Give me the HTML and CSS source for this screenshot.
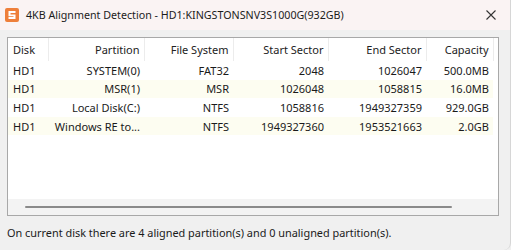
FILE: index.html
```html
<!DOCTYPE html>
<html lang="en">
<head>
    <meta charset="UTF-8">
    <title>4KB Alignment Detection</title>
    <link rel="stylesheet" href="styles.css">
</head>
<body>
    <div class="window">
        <div class="titlebar">
            <svg class="app-icon" width="14" height="14" viewBox="0 0 14 14">
                <rect x="0" y="0" width="14" height="14" rx="2" fill="#ee7f3a"/>
                <path d="M3.5 3h7v2h-5v1.5h5v4.5h-7v-2h5v-0.8h-5z" fill="#fff"/>
            </svg>
            <span class="title">4KB Alignment Detection - HD1:KINGSTONSNV3S1000G(932GB)</span>
            <svg class="close" width="10" height="10" viewBox="0 0 10 10">
                <path d="M0.5 0.5l9 9M9.5 0.5l-9 9" stroke="#333" stroke-width="1.1" fill="none"/>
            </svg>
        </div>
        <div class="content">
            <div class="listview">
                <table>
                    <thead>
                        <tr>
                            <th class="c-disk">Disk</th>
                            <th class="c-part">Partition</th>
                            <th class="c-fs">File System</th>
                            <th class="c-start">Start Sector</th>
                            <th class="c-end">End Sector</th>
                            <th class="c-cap">Capacity</th>
                        </tr>
                    </thead>
                    <tbody>
                        <tr>
                            <td class="c-disk">HD1</td>
                            <td>SYSTEM(0)</td>
                            <td>FAT32</td>
                            <td>2048</td>
                            <td>1026047</td>
                            <td>500.0MB</td>
                        </tr>
                        <tr class="alt">
                            <td class="c-disk">HD1</td>
                            <td>MSR(1)</td>
                            <td>MSR</td>
                            <td>1026048</td>
                            <td>1058815</td>
                            <td>16.0MB</td>
                        </tr>
                        <tr>
                            <td class="c-disk">HD1</td>
                            <td>Local Disk(C:)</td>
                            <td>NTFS</td>
                            <td>1058816</td>
                            <td>1949327359</td>
                            <td>929.0GB</td>
                        </tr>
                        <tr class="alt">
                            <td class="c-disk">HD1</td>
                            <td>Windows RE to...</td>
                            <td>NTFS</td>
                            <td>1949327360</td>
                            <td>1953521663</td>
                            <td>2.0GB</td>
                        </tr>
                    </tbody>
                </table>
                <div class="spacer"></div>
                <div class="hscroll"><div class="thumb"></div></div>
            </div>
            <p class="status">On current disk there are 4 aligned partition(s) and 0 unaligned partition(s).</p>
        </div>
    </div>
</body>
</html>
```
FILE: styles.css
```css
* {
    margin: 0;
    padding: 0;
    box-sizing: border-box;
}

body {
    width: 511px;
    height: 250px;
    overflow: hidden;
    background: #f0f0f0;
    font-family: "Noto Sans", "Open Sans", sans-serif;
    font-size: 11px;
    color: #1a1a1a;
}

.window {
    height: 250px;
    display: flex;
    flex-direction: column;
    background: #f0f0f0;
    border-right: 1px solid #d6d6d6;
    border-bottom-right-radius: 7px;
}

.titlebar {
    height: 30px;
    display: flex;
    align-items: center;
    background: #faf3f3;
    padding: 0 0 0 5px;
}

.app-icon {
    flex: none;
    margin-right: 7px;
}

.title {
    flex: 1;
    color: #1c1c1c;
    font-size: 10.7px;
}

.close {
    flex: none;
    margin-right: 14px;
}

.content {
    flex: 1;
    padding: 7px 11px 0 7px;
}

.listview {
    height: 179px;
    background: #fff;
    border: 1px solid #a8a8a8;
    display: flex;
    flex-direction: column;
}

table {
    border-collapse: collapse;
    table-layout: fixed;
    width: 485px;
}

th {
    height: 23px;
    font-weight: normal;
    text-align: right;
    padding: 0 4px 0 0;
    border-right: 1px solid #ececec;
    color: #222;
    white-space: nowrap;
}

td {
    height: 18.6px;
    text-align: right;
    padding: 0 4px 0 0;
    white-space: nowrap;
}

th.c-disk,
td.c-disk {
    text-align: left;
    padding-left: 5px;
}

.c-disk { width: 40px; }
.c-part { width: 96px; }
.c-fs { width: 89px; }
.c-start { width: 95px; }
.c-end { width: 98px; }
.c-cap { width: 67px; }

tr.alt td {
    background: #fdfdf1;
}

.spacer {
    flex: 1;
}

.hscroll {
    height: 16px;
    background: #f3f3f3;
    display: flex;
    align-items: center;
    padding: 0 46px 0 17px;
}

.thumb {
    flex: 1;
    height: 2px;
    background: #8a8a8a;
    border-radius: 1px;
}

.status {
    margin-top: 9px;
    font-size: 10.9px;
    color: #1a1a1a;
}
```
